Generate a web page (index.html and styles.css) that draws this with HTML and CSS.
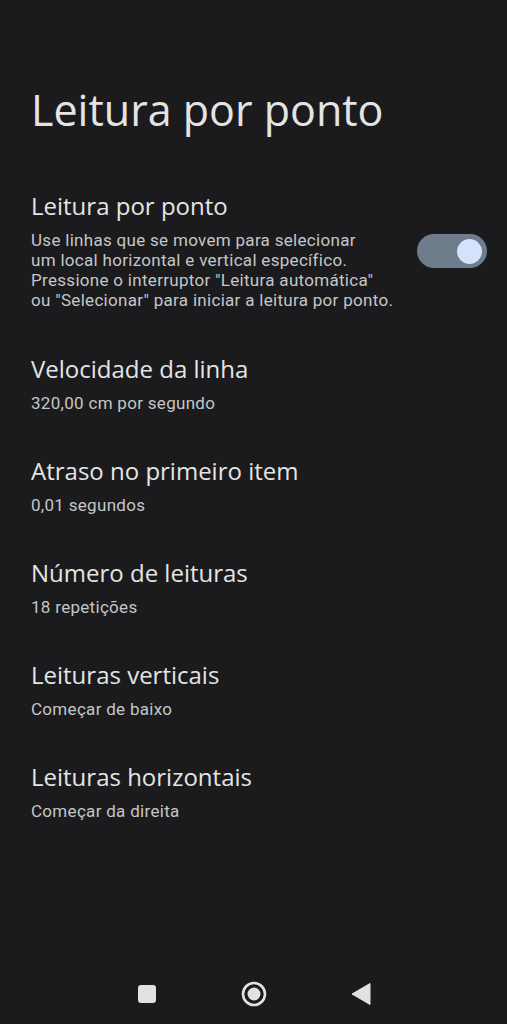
FILE: index.html
```
<!DOCTYPE html>
<html lang="pt">
<head>
    <meta charset="UTF-8">
    <title>Leitura por ponto</title>
    <link rel="stylesheet" href="styles.css">
</head>
<body>
<div id="page">
    <h1 class="head">Leitura por ponto</h1>
    <ul class="list">
        <li class="item">
            <div class="text">
                <div class="title">Leitura por ponto</div>
                <div class="sub">Use linhas que se movem para selecionar<br>um local horizontal e vertical específico.<br>Pressione o interruptor "Leitura automática"<br>ou "Selecionar" para iniciar a leitura por ponto.</div>
            </div>
            <div class="switch on"><span></span></div>
        </li>
        <li class="item">
            <div class="text">
                <div class="title">Velocidade da linha</div>
                <div class="sub">320,00 cm por segundo</div>
            </div>
        </li>
        <li class="item">
            <div class="text">
                <div class="title">Atraso no primeiro item</div>
                <div class="sub">0,01 segundos</div>
            </div>
        </li>
        <li class="item">
            <div class="text">
                <div class="title">Número de leituras</div>
                <div class="sub">18 repetições</div>
            </div>
        </li>
        <li class="item">
            <div class="text">
                <div class="title">Leituras verticais</div>
                <div class="sub">Começar de baixo</div>
            </div>
        </li>
        <li class="item">
            <div class="text">
                <div class="title">Leituras horizontais</div>
                <div class="sub">Começar da direita</div>
            </div>
        </li>
    </ul>
    <div class="navbar">
        <svg width="24" height="24" viewBox="0 0 24 24"><rect x="3" y="3" width="18" height="18" rx="3" fill="#e2e2e2"/></svg>
        <svg width="26" height="26" viewBox="0 0 26 26"><circle cx="13" cy="13" r="11" fill="none" stroke="#e2e2e2" stroke-width="2.6"/><circle cx="13" cy="13" r="6.5" fill="#e2e2e2"/></svg>
        <svg width="24" height="24" viewBox="0 0 24 24"><path d="M21 1.5 L21 22.5 L3 12 Z" fill="#e2e2e2" stroke="#e2e2e2" stroke-width="1" stroke-linejoin="round"/></svg>
    </div>
</div>
</body>
</html>
```

FILE: styles.css
```
*{
    margin: 0;
    padding: 0;
}
li{
    list-style: none;
}
body{
    background: #1b1b1d;
}
#page{
    min-height: 1024px;
    display: flex;
    flex-direction: column;
    padding: 0 20px 0 31px;
    box-sizing: border-box;
}
.head{
    padding-top: 84px;
    font-family: "Open Sans", sans-serif;
    font-weight: 400;
    font-size: 43px;
    line-height: 52px;
    color: #e4e4e4;
    margin-bottom: 34px;
}
.item{
    display: flex;
    align-items: center;
    padding: 22px 0;
}
.item:first-child{
    padding-bottom: 23px;
}
.text{
    flex: 1;
}
.title{
    font-family: "Open Sans", sans-serif;
    font-size: 24px;
    line-height: 28px;
    color: #e4e4e4;
    margin-bottom: 10px;
}
.sub{
    font-family: Roboto, sans-serif;
    font-size: 17px;
    line-height: 20px;
    letter-spacing: 0.3px;
    color: #c4c6c8;
    white-space: nowrap;
}
.switch{
    width: 70px;
    height: 34px;
    border-radius: 17px;
    background: #6f7c8b;
    display: flex;
    align-items: center;
    justify-content: flex-end;
    padding: 0 5px;
    box-sizing: border-box;
}
.switch span{
    width: 25px;
    height: 25px;
    border-radius: 50%;
    background: #d4e3fc;
}
.navbar{
    margin-top: auto;
    height: 60px;
    display: flex;
    align-items: center;
    justify-content: center;
    gap: 82px;
    margin-left: -11px;
}
```
